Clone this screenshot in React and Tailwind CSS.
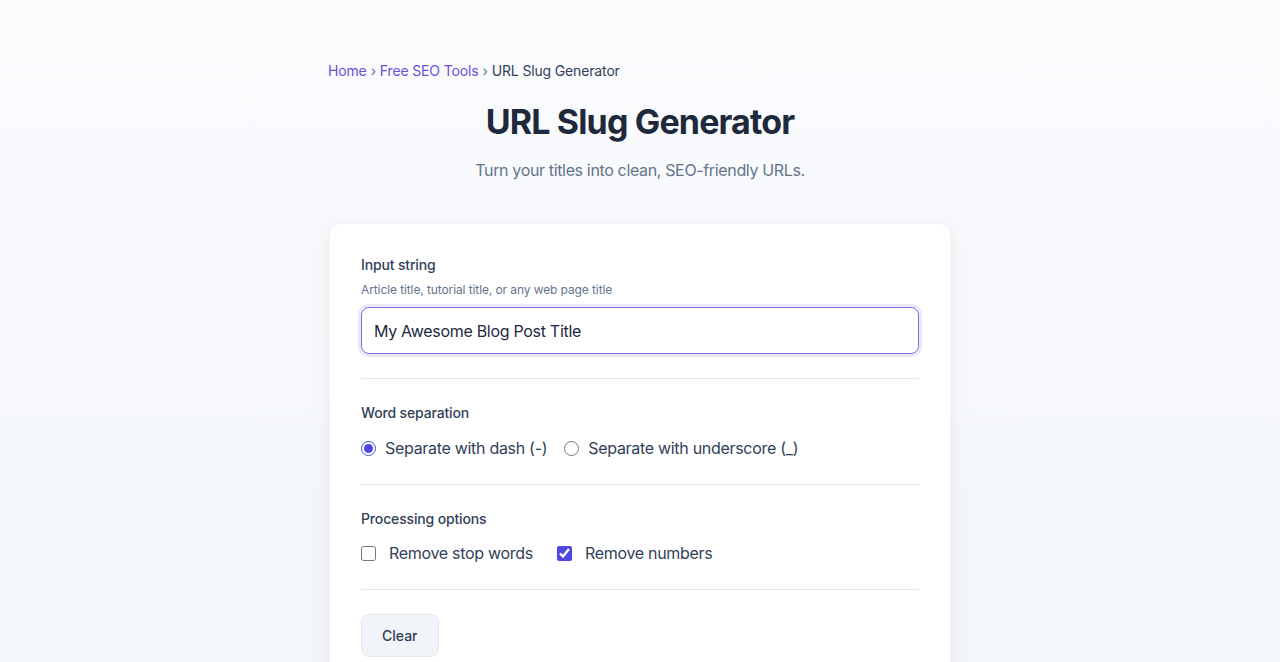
import { useState } from "react";

export default function App() {
  const [text, setText] = useState("My Awesome Blog Post Title");
  const [separator, setSeparator] = useState("dash");
  const [removeStop, setRemoveStop] = useState(false);
  const [removeNumbers, setRemoveNumbers] = useState(true);

  return (
    <div
      className="min-h-screen bg-linear-to-b from-[#fafbfd] to-[#f3f6fa] text-slate-700"
      style={{ fontFamily: "Inter, 'Noto Sans', sans-serif" }}
    >
      <div className="w-[624px] mx-auto pt-[61px]">
        {/* breadcrumb */}
        <nav className="text-sm leading-5 tracking-[-0.15px] text-slate-700 flex items-center gap-1">
          <a href="#" className="text-[#6d4fd8]">Home</a>
          <span className="text-slate-500">›</span>
          <a href="#" className="text-[#6d4fd8]">Free SEO Tools</a>
          <span className="text-slate-500">›</span>
          <span>URL Slug Generator</span>
        </nav>

        <h1 className="mt-[21px] text-center text-[34px] leading-[40px] font-bold tracking-tight text-[#1e293b]">
          URL Slug Generator
        </h1>
        <p className="mt-[16px] text-center text-base leading-6 tracking-[-0.35px] text-[#64748b]">
          Turn your titles into clean, SEO-friendly URLs.
        </p>

        <div className="mt-[41px] mx-px bg-white rounded-xl border border-slate-100 shadow-[0_4px_24px_rgba(15,23,42,0.06)] px-[31px] pt-[31px] pb-6">
          {/* input */}
          <div className="pb-6 border-b border-slate-200">
            <label className="block text-sm leading-5 font-medium tracking-[-0.15px] text-slate-700">Input string</label>
            <p className="mt-[7px] text-xs leading-4 tracking-[-0.1px] text-slate-500">
              Article title, tutorial title, or any web page title
            </p>
            <input
              value={text}
              onChange={(e) => setText(e.target.value)}
              className="mt-[9px] w-full h-[47px] px-3 rounded-lg border border-[#7b6fdc] ring-[3px] ring-[#ebe8fb] text-base tracking-[-0.3px] text-slate-800 outline-none bg-white"
            />
          </div>

          {/* separation */}
          <div className="py-6 border-b border-slate-200">
            <p className="text-sm leading-5 font-medium tracking-[-0.15px] text-slate-700">Word separation</p>
            <div className="mt-[13px] flex items-center gap-[17px] h-6">
              <label className="flex items-center gap-[9px] text-base tracking-[-0.3px] text-slate-700">
                <input
                  type="radio"
                  name="sep"
                  checked={separator === "dash"}
                  onChange={() => setSeparator("dash")}
                  className="w-[15px] h-[15px] m-0 accent-[#4f46e5]"
                />
                Separate with dash (-)
              </label>
              <label className="flex items-center gap-[9px] text-base tracking-[-0.3px] text-slate-700">
                <input
                  type="radio"
                  name="sep"
                  checked={separator === "underscore"}
                  onChange={() => setSeparator("underscore")}
                  className="w-[15px] h-[15px] m-0 accent-[#4f46e5]"
                />
                Separate with underscore (_)
              </label>
            </div>
          </div>

          {/* processing */}
          <div className="py-6 border-b border-slate-200">
            <p className="text-sm leading-5 font-medium tracking-[-0.15px] text-slate-700">Processing options</p>
            <div className="mt-[12px] flex items-center gap-6 h-6">
              <label className="flex items-center gap-[13px] text-base tracking-[-0.3px] text-slate-700">
                <input
                  type="checkbox"
                  checked={removeStop}
                  onChange={(e) => setRemoveStop(e.target.checked)}
                  className="w-[15px] h-[15px] m-0 accent-[#4f46e5]"
                />
                Remove stop words
              </label>
              <label className="flex items-center gap-[13px] text-base tracking-[-0.3px] text-slate-700">
                <input
                  type="checkbox"
                  checked={removeNumbers}
                  onChange={(e) => setRemoveNumbers(e.target.checked)}
                  className="w-[15px] h-[15px] m-0 accent-[#4f46e5]"
                />
                Remove numbers
              </label>
            </div>
          </div>

          {/* actions */}
          <div className="pt-6">
            <button
              onClick={() => setText("")}
              className="h-[43px] px-[20px] rounded-lg bg-slate-100 border border-slate-200 text-sm font-medium text-slate-700"
            >
              Clear
            </button>
          </div>
        </div>
      </div>
    </div>
  );
}
